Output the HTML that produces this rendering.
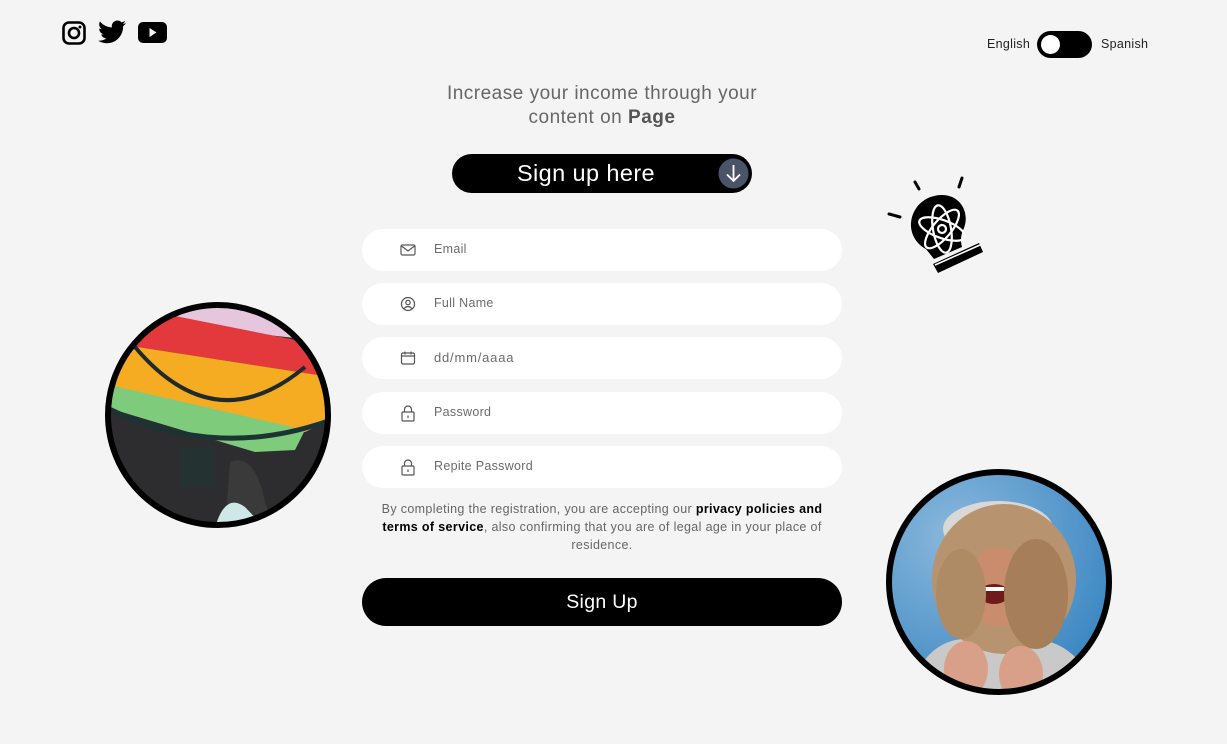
<!DOCTYPE html>
<html><head><meta charset="utf-8"><style>
*{margin:0;padding:0;box-sizing:border-box}
body{width:1227px;height:744px;background:#f4f4f4;font-family:"Liberation Sans",sans-serif;position:relative;overflow:hidden;color:#666}
.abs{position:absolute}
.inp{position:absolute;left:362px;width:480px;height:42px;background:#fff;border-radius:21px}
.inp svg{position:absolute;left:38px;top:13px}
.inp span{position:absolute;left:72px;top:13px;font-size:12.5px;color:#6b6b6b;letter-spacing:.3px}
</style></head><body>
<svg class="abs" style="left:62px;top:21px" width="24" height="24" viewBox="0 0 24 24"><rect x="1.5" y="1.5" width="21" height="21" rx="5.5" fill="none" stroke="#000" stroke-width="2.6"/><circle cx="12" cy="12" r="5" fill="none" stroke="#000" stroke-width="2.6"/><circle cx="18" cy="6" r="1.5"/></svg>
<svg class="abs" style="left:98px;top:20px" width="28" height="24" viewBox="0 0 24 20"><path d="M24 2.4c-.9.4-1.8.6-2.8.8 1-.6 1.8-1.6 2.2-2.7-1 .6-2 1-3.1 1.2C19.4.7 18.1.1 16.7.1c-2.7 0-4.9 2.2-4.9 4.9 0 .4 0 .8.1 1.1C7.8 5.9 4.2 4 1.7 1 1.3 1.7 1 2.6 1 3.5c0 1.700.9 3.2 2.2 4.1-.8 0-1.6-.2-2.2-.6v.1c0 2.4 1.7 4.4 3.9 4.8-.4.1-.8.2-1.3.2-.3 0-.6 0-.9-.1.6 2 2.4 3.4 4.6 3.4-1.7 1.3-3.8 2.1-6.1 2.1-.4 0-.8 0-1.2-.1 2.2 1.4 4.8 2.2 7.5 2.2 9.1 0 14-7.5 14-14v-.6c1-.7 1.8-1.6 2.5-2.6z"/></svg>
<svg class="abs" style="left:138px;top:22px" width="29" height="22" viewBox="0 0 29 22"><rect x="0" y="0" width="29" height="21" rx="5"/><path d="M11.5 6l7 4.5-7 4.5z" fill="#f4f4f4"/></svg>
<div class="abs" style="left:987px;top:37px;font-size:12.5px;color:#222;letter-spacing:.3px">English</div>
<div class="abs" style="left:1037px;top:31px;width:55px;height:27px;background:#000;border-radius:14px"><div style="position:absolute;left:4px;top:4px;width:19px;height:19px;border-radius:50%;background:#fff"></div></div>
<div class="abs" style="left:1101px;top:37px;font-size:12.5px;color:#222;letter-spacing:.3px">Spanish</div>
<div class="abs" style="left:382px;top:82px;width:440px;text-align:center;font-size:19px;letter-spacing:.5px;line-height:24px;color:#666">Increase your income through your<br>content on <b style="color:#555">Page</b></div>
<div class="abs" style="left:452px;top:154px;width:300px;height:39px;background:#000;border-radius:20px"><div style="position:absolute;left:0;width:268px;top:6px;text-align:center;font-size:23.5px;letter-spacing:.4px;color:#fff">Sign up here</div>
<svg style="position:absolute;left:266px;top:4px" width="31" height="31" viewBox="0 0 31 31"><circle cx="15.5" cy="15.5" r="15" fill="#4a5468"/><path d="M15.5 7v16M9 16.5l6.5 6.5 6.5-6.5" stroke="#fff" stroke-width="1.8" fill="none"/></svg></div>
<svg class="abs" style="left:885px;top:172px" width="105" height="110" viewBox="0 0 105 110">
<g stroke="#000" stroke-width="3" stroke-linecap="round"><line x1="30" y1="10" x2="34" y2="17"/><line x1="77" y1="6" x2="74" y2="15"/><line x1="4" y1="42" x2="15" y2="45"/></g>
<path d="M57 23c-18 0-32 14-31 32 1 10 7 18 15 22l8 10 28-12c-2-7-1-13 2-19 6-16-4-33-22-33z"/>
<path d="M48 92l46-21 4 9-45 21z"/>
<line x1="50" y1="93" x2="95" y2="73" stroke="#fff" stroke-width="1.6"/>
<g fill="none" stroke="#fff" stroke-width="2.2"><ellipse cx="57" cy="57" rx="24" ry="9" transform="rotate(20 57 57)"/><ellipse cx="57" cy="57" rx="24" ry="9" transform="rotate(-50 57 57)"/><ellipse cx="57" cy="57" rx="24" ry="9" transform="rotate(80 57 57)"/><circle cx="57" cy="57" r="4"/></g>
</svg>
<svg class="abs" style="left:105px;top:302px" width="226" height="226" viewBox="0 0 226 226">
<defs><clipPath id="c1"><circle cx="113" cy="113" r="108"/></clipPath></defs>
<g clip-path="url(#c1)">
<rect width="226" height="226" fill="#2d2d2f"/>
<polygon points="0,0 226,0 226,40 0,15" fill="#e6c6dc"/>
<polygon points="0,12 60,12 226,45 226,75 0,40" fill="#e3393d"/>
<polygon points="0,40 226,75 226,118 200,130 0,85" fill="#f5ac22"/>
<polygon points="0,82 200,128 190,148 150,150 0,105" fill="#7fcb7c"/>
<path d="M30 45 Q110 140 200 65" stroke="#1f2a2a" stroke-width="4" fill="none"/>
<path d="M0 105 Q110 160 226 118" stroke="#1d3333" stroke-width="5" fill="none"/>
<rect x="75" y="145" width="35" height="40" fill="#243231"/>
<path d="M120 226 L125 160 Q150 150 160 200 L170 226z" fill="#3a3a3a"/>
<path d="M110 226 Q120 190 140 205 L160 226z" fill="#cfe7e6"/>
</g>
<circle cx="113" cy="113" r="110" fill="none" stroke="#000" stroke-width="6"/>
</svg>
<svg class="abs" style="left:886px;top:469px" width="226" height="226" viewBox="0 0 226 226">
<defs><clipPath id="c2"><circle cx="113" cy="113" r="108"/></clipPath><radialGradient id="bg2" cx=".3" cy=".3" r=".9"><stop offset="0" stop-color="#8ab8dc"/><stop offset="1" stop-color="#2f7fbe"/></radialGradient></defs>
<g clip-path="url(#c2)">
<rect width="226" height="226" fill="url(#bg2)"/>
<path d="M20 226 Q40 170 80 170 L150 170 Q195 175 210 226z" fill="#c9c9c9"/>
<ellipse cx="112" cy="60" rx="55" ry="28" fill="#d8d8d8"/>
<ellipse cx="118" cy="110" rx="72" ry="75" fill="#b89370"/>
<ellipse cx="112" cy="118" rx="30" ry="40" fill="#c98c6c"/>
<ellipse cx="108" cy="125" rx="15" ry="10" fill="#6d1b1b"/>
<rect x="98" y="118" width="20" height="4" fill="#fff"/>
<ellipse cx="150" cy="125" rx="32" ry="55" fill="#a67e59"/>
<ellipse cx="75" cy="125" rx="25" ry="45" fill="#ae8a65"/>
<ellipse cx="80" cy="200" rx="22" ry="28" fill="#d9a089"/>
<ellipse cx="135" cy="205" rx="22" ry="28" fill="#d9a089"/>
</g>
<circle cx="113" cy="113" r="110" fill="none" stroke="#000" stroke-width="6"/>
</svg>
<div class="inp" style="top:229px"><svg width="16" height="16" viewBox="0 0 16 16" fill="none" stroke="#555" stroke-width="1.2"><rect x="1" y="3" width="14" height="10" rx="1.5"/><path d="M1.5 4l6.5 5 6.5-5"/></svg><span>Email</span></div>
<div class="inp" style="top:283px"><svg width="16" height="16" viewBox="0 0 16 16" fill="none" stroke="#555" stroke-width="1.2"><circle cx="8" cy="8" r="6.5"/><circle cx="8" cy="6.5" r="2.2"/><path d="M4 12.5q4-4 8 0"/></svg><span>Full Name</span></div>
<div class="inp" style="top:337px"><svg width="16" height="16" viewBox="0 0 16 16" fill="none" stroke="#555" stroke-width="1.2"><rect x="1.5" y="3" width="13" height="11" rx="1.5"/><path d="M1.5 6h13M5 1.5v3M11 1.5v3"/></svg><span style="font-size:13px;letter-spacing:.8px">dd/mm/aaaa</span></div>
<div class="inp" style="top:392px"><svg width="16" height="17" viewBox="0 0 16 17" fill="none" stroke="#555" stroke-width="1.2"><rect x="2" y="7" width="12" height="9" rx="1"/><path d="M4.5 7V4.5a3.5 3.5 0 0 1 7 0V7M8 10.5v2.5"/></svg><span>Password</span></div>
<div class="inp" style="top:446px"><svg width="16" height="17" viewBox="0 0 16 17" fill="none" stroke="#555" stroke-width="1.2"><rect x="2" y="7" width="12" height="9" rx="1"/><path d="M4.5 7V4.5a3.5 3.5 0 0 1 7 0V7M8 10.5v2.5"/></svg><span>Repite Password</span></div>
<div class="abs" style="left:374px;top:500px;width:456px;text-align:center;font-size:12.5px;letter-spacing:.35px;line-height:18px;color:#666">By completing the registration, you are accepting our <b style="color:#000">privacy policies and terms of service</b>, also confirming that you are of legal age in your place of residence.</div>
<div class="abs" style="left:362px;top:578px;width:480px;height:48px;background:#000;border-radius:24px;color:#fff;text-align:center;font-size:19.5px;letter-spacing:.3px;line-height:48px">Sign Up</div>
</body></html>
